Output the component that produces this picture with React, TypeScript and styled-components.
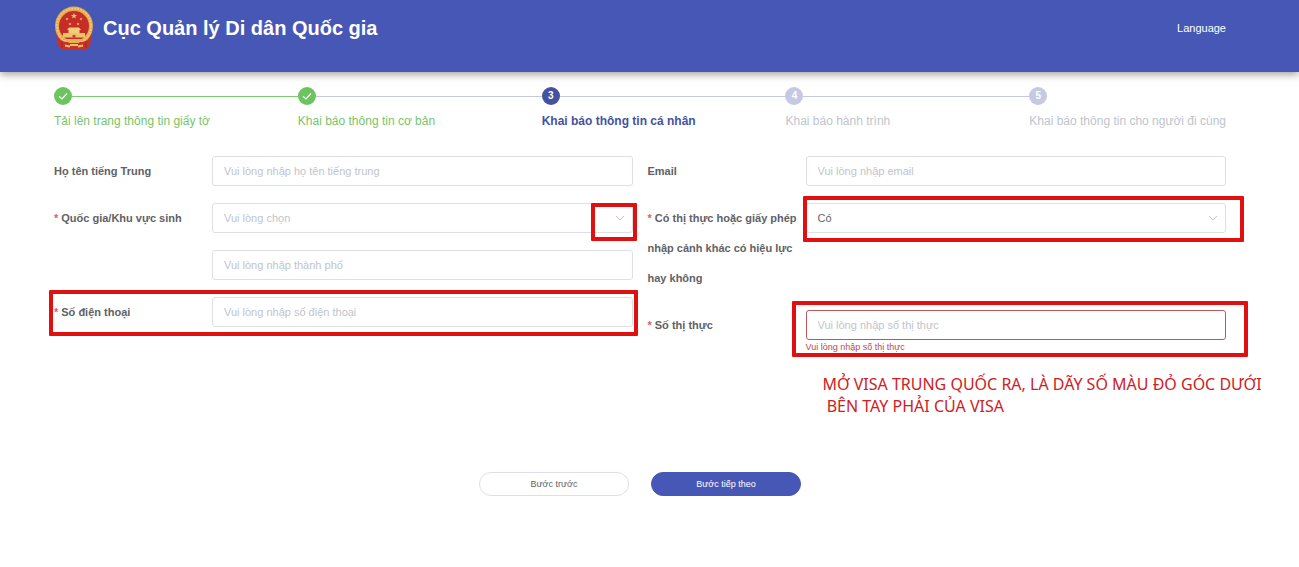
import React from 'react';
import styled, { createGlobalStyle, css } from 'styled-components';

const GlobalStyle = createGlobalStyle`
  *, *::before, *::after { box-sizing: border-box; }
  body {
    margin: 0;
    background: #fff;
    color: #606266;
    font-family: "Liberation Sans", Arial, sans-serif;
    font-size: 11px;
  }
  input, select, button { font: inherit; }
`;

const Header = styled.header`
  display: flex;
  align-items: flex-start;
  justify-content: space-between;
  height: 72px;
  padding: 6px 73px 0 54px;
  background: #4757b5;
  color: #fff;
  box-shadow: 0 2px 8px rgba(60, 50, 40, 0.5);
`;

const Brand = styled.div`
  display: flex;
  align-items: center;
  gap: 9px;
`;

const Title = styled.h1`
  margin: 0;
  font-size: 20px;
  line-height: 44px;
  font-weight: 700;
  white-space: nowrap;
`;

const LanguageButton = styled.button`
  padding: 0;
  border: 0;
  background: none;
  color: #fff;
  font-size: 11px;
  line-height: 44px;
  cursor: pointer;
`;

const Main = styled.main`
  padding: 14px 73px 24px 54px;
`;

type StepState = 'done' | 'current' | 'waiting';

const stepColors = {
  done: { dot: '#6cc45f', text: '#79c46c', line: '#7dc972' },
  current: { dot: '#45529f', text: '#45529f', line: '#c6c8dc' },
  waiting: { dot: '#c6c9e4', text: '#c0c4cc', line: '#c6c8dc' },
};

const StepList = styled.ol`
  display: flex;
  margin: 0;
  padding: 0;
  list-style: none;
`;

const StepItem = styled.li`
  flex: 1;
  min-width: 0;
  &:last-child { flex: none; }
`;

const StepHead = styled.div`
  display: flex;
  align-items: center;
  height: 20px;
`;

const StepDot = styled.span<{ $state: StepState }>`
  display: flex;
  flex: none;
  align-items: center;
  justify-content: center;
  width: 18px;
  height: 18px;
  border-radius: 50%;
  background: ${(p) => stepColors[p.$state].dot};
  color: #fff;
  font-size: 10px;
  line-height: 18px;
  font-weight: 700;
`;

const StepLine = styled.span<{ $done: boolean }>`
  flex: 1;
  height: 1px;
  background: ${(p) => stepColors[p.$done ? 'done' : 'waiting'].line};
`;

const StepLabel = styled.div<{ $state: StepState }>`
  margin-top: 5px;
  font-size: 12px;
  line-height: 20px;
  font-weight: ${(p) => (p.$state === 'current' ? 700 : 400)};
  color: ${(p) => stepColors[p.$state].text};
  white-space: nowrap;
`;

const Form = styled.form`
  margin-top: 25px;
`;

const Columns = styled.div`
  display: grid;
  grid-template-columns: repeat(2, minmax(0, 1fr));
  column-gap: 15px;
`;

const Column = styled.div`
  display: flex;
  flex-direction: column;
  gap: 17px;
`;

/* Red frame drawn over the part that the reader should fill in. */
const frame = css<{ $frame?: string }>`
  position: relative;
  ${(p) =>
    p.$frame &&
    css`
      &::after {
        content: '';
        position: absolute;
        inset: ${p.$frame};
        border: 4px solid #e01010;
        border-radius: 1px;
        pointer-events: none;
      }
    `}
`;

const Row = styled.div<{ $frame?: string }>`
  display: grid;
  grid-template-columns: 158px minmax(0, 1fr);
  ${frame}
`;

const Label = styled.label`
  padding-right: 4px;
  font-size: 11px;
  line-height: 30px;
  font-weight: 700;
  color: #606266;
`;

const Required = styled.span`
  margin-right: 3px;
  color: #e0605c;
`;

const Control = styled.div<{ $frame?: string }>`
  ${frame}
`;

const control = css`
  display: block;
  width: 100%;
  height: 30px;
  padding: 0 11px;
  border: 1px solid #dcdfe6;
  border-radius: 3px;
  background: #fff;
  color: #606266;
  font-size: 11px;
  outline: none;
`;

const TextInput = styled.input<{ $invalid?: boolean }>`
  ${control}
  ${(p) => p.$invalid && css`border-color: #b8585a;`}
  &::placeholder { color: #c0c4cc; opacity: 1; }
`;

const Select = styled.select<{ $empty?: boolean }>`
  ${control}
  appearance: none;
  ${(p) => p.$empty && css`color: #c0c4cc;`}
`;

const Chevron = styled.svg`
  position: absolute;
  top: 11px;
  right: 8px;
  pointer-events: none;
`;

const ErrorText = styled.div`
  margin-top: 1px;
  font-size: 9px;
  line-height: 12px;
  color: #c0484c;
`;

const Note = styled.p`
  margin: 3px 0 0 175px;
  font-family: "Noto Sans", "Open Sans", sans-serif;
  font-size: 16px;
  line-height: 22px;
  color: #d0201f;
  white-space: pre;
`;

const Actions = styled.div`
  display: flex;
  justify-content: center;
  gap: 22px;
  margin-top: 55px;
`;

const Button = styled.button<{ $primary?: boolean }>`
  width: 150px;
  height: 24px;
  padding: 0;
  border: 1px solid ${(p) => (p.$primary ? '#4757b5' : '#dcdfe6')};
  border-radius: 12px;
  background: ${(p) => (p.$primary ? '#4757b5' : '#fff')};
  color: ${(p) => (p.$primary ? '#fff' : '#606266')};
  font-size: 9px;
  cursor: pointer;
`;

const Star = ({ x, y, r }: { x: number; y: number; r: number }) => {
  const points = Array.from({ length: 10 }, (_, i) => {
    const radius = i % 2 ? r * 0.42 : r;
    const angle = (Math.PI / 5) * i - Math.PI / 2;
    return `${x + radius * Math.cos(angle)},${y + radius * Math.sin(angle)}`;
  }).join(' ');
  return <polygon points={points} fill="#f6c968" />;
};

const Emblem = () => (
  <svg width="40" height="44" viewBox="0 0 40 44" aria-hidden="true">
    <path d="M2 25 Q3 37 5 41 Q9 44 13 43 H27 Q31 44 35 41 Q37 37 38 25 Z" fill="#c9302a" />
    <ellipse cx="20" cy="20" rx="19" ry="19.500" fill="#dfa94c" />
    <ellipse cx="20" cy="20" rx="17" ry="17.500" fill="none" stroke="#efc67a" strokeWidth="2" strokeDasharray="2 1" />
    <circle cx="20" cy="20" r="15" fill="#c62d26" />
    <Star x={20} y={10} r={3.2} />
    <Star x={13} y={13} r={1.6} />
    <Star x={27} y={13} r={1.6} />
    <Star x={16} y={18} r={1.6} />
    <Star x={24} y={18} r={1.6} />
    <path d="M15 21.500 H25 L27 24 H13 Z M14.500 24 H25.500 V27 H14.500 Z" fill="#f3cd79" />
    <path d="M9 27 H31 V31.500 H9 Z" fill="#efc26a" />
    <path d="M18.500 29 H21.500 V31.500 H18.500 Z" fill="#b5482a" />
    <path d="M3 33 Q10 36 12 36 H28 Q30 36 37 33 L35 41 Q31 44 27 43 H13 Q9 44 5 41 Z" fill="#c9302a" />
    <path d="M12 33 H28 L25 37 H15 Z" fill="#e5b159" />
    <path d="M11 39.500 L16 40.500 M29 39.500 L24 40.500 M16 39 H24" stroke="#efc26a" strokeWidth="1.800" />
    <path d="M8 35 V42 M32 35 V42" stroke="#a52320" />
  </svg>
);

const CheckIcon = () => (
  <svg width="10" height="10" viewBox="0 0 10 10" aria-hidden="true">
    <path d="M1 5.200 L4 8 L9 2.500" fill="none" stroke="#fff" strokeWidth="1.200" />
  </svg>
);

const ChevronIcon = () => (
  <Chevron width="10" height="8" viewBox="0 0 10 8" aria-hidden="true">
    <path d="M1 2 L5 6 L9 2" fill="none" stroke="#c0c4cc" />
  </Chevron>
);

const steps: { label: string; state: StepState }[] = [
  { label: 'Tải lên trang thông tin giấy tờ', state: 'done' },
  { label: 'Khai báo thông tin cơ bản', state: 'done' },
  { label: 'Khai báo thông tin cá nhân', state: 'current' },
  { label: 'Khai báo hành trình', state: 'waiting' },
  { label: 'Khai báo thông tin cho người đi cùng', state: 'waiting' },
];

export default function App() {
  return (
    <>
      <GlobalStyle />
      <Header>
        <Brand>
          <Emblem />
          <Title>Cục Quản lý Di dân Quốc gia</Title>
        </Brand>
        <LanguageButton type="button">Language</LanguageButton>
      </Header>
      <Main>
        <StepList>
          {steps.map((step, i) => (
            <StepItem key={step.label}>
              <StepHead>
                <StepDot $state={step.state}>{step.state === 'done' ? <CheckIcon /> : i + 1}</StepDot>
                {i < steps.length - 1 && <StepLine $done={i === 0} />}
              </StepHead>
              <StepLabel $state={step.state}>{step.label}</StepLabel>
            </StepItem>
          ))}
        </StepList>
        <Form onSubmit={(e) => e.preventDefault()}>
          <Columns>
            <Column>
              <Row>
                <Label htmlFor="chinese-name">Họ tên tiếng Trung</Label>
                <TextInput id="chinese-name" placeholder="Vui lòng nhập họ tên tiếng trung" />
              </Row>
              <Row>
                <Label htmlFor="country"><Required>*</Required>Quốc gia/Khu vực sinh</Label>
                <Control $frame="0 -4px -8px calc(100% - 42px)">
                  <Select id="country" $empty defaultValue="">
                    <option value="">Vui lòng chọn</option>
                  </Select>
                  <ChevronIcon />
                </Control>
              </Row>
              <Row>
                <span />
                <TextInput aria-label="Thành phố" placeholder="Vui lòng nhập thành phố" />
              </Row>
              <Row $frame="-7px -5px -9px -5px">
                <Label htmlFor="phone"><Required>*</Required>Số điện thoại</Label>
                <TextInput id="phone" type="tel" placeholder="Vui lòng nhập số điện thoại" />
              </Row>
            </Column>
            <Column>
              <Row>
                <Label htmlFor="email">Email</Label>
                <TextInput id="email" type="email" placeholder="Vui lòng nhập email" />
              </Row>
              <Row>
                <Label htmlFor="has-visa">
                  <Required>*</Required>Có thị thực hoặc giấy phép nhập cảnh khác có hiệu lực hay không
                </Label>
                <div>
                  <Control $frame="-7px -18px -9px -3px">
                    <Select id="has-visa" defaultValue="yes">
                      <option value="yes">Có</option>
                    </Select>
                    <ChevronIcon />
                  </Control>
                </div>
              </Row>
              <Row>
                <Label htmlFor="visa-number"><Required>*</Required>Số thị thực</Label>
                <Control $frame="-9px -22px -4px -14px">
                  <TextInput
                    id="visa-number"
                    $invalid
                    aria-invalid="true"
                    aria-describedby="visa-error"
                    placeholder="Vui lòng nhập số thị thực"
                  />
                  <ErrorText id="visa-error">Vui lòng nhập số thị thực</ErrorText>
                </Control>
              </Row>
              <Note>{'MỞ VISA TRUNG QUỐC RA, LÀ DÃY SỐ MÀU ĐỎ GÓC DƯỚI\n BÊN TAY PHẢI CỦA VISA'}</Note>
            </Column>
          </Columns>
          <Actions>
            <Button type="button">Bước trước</Button>
            <Button type="submit" $primary>Bước tiếp theo</Button>
          </Actions>
        </Form>
      </Main>
    </>
  );
}
